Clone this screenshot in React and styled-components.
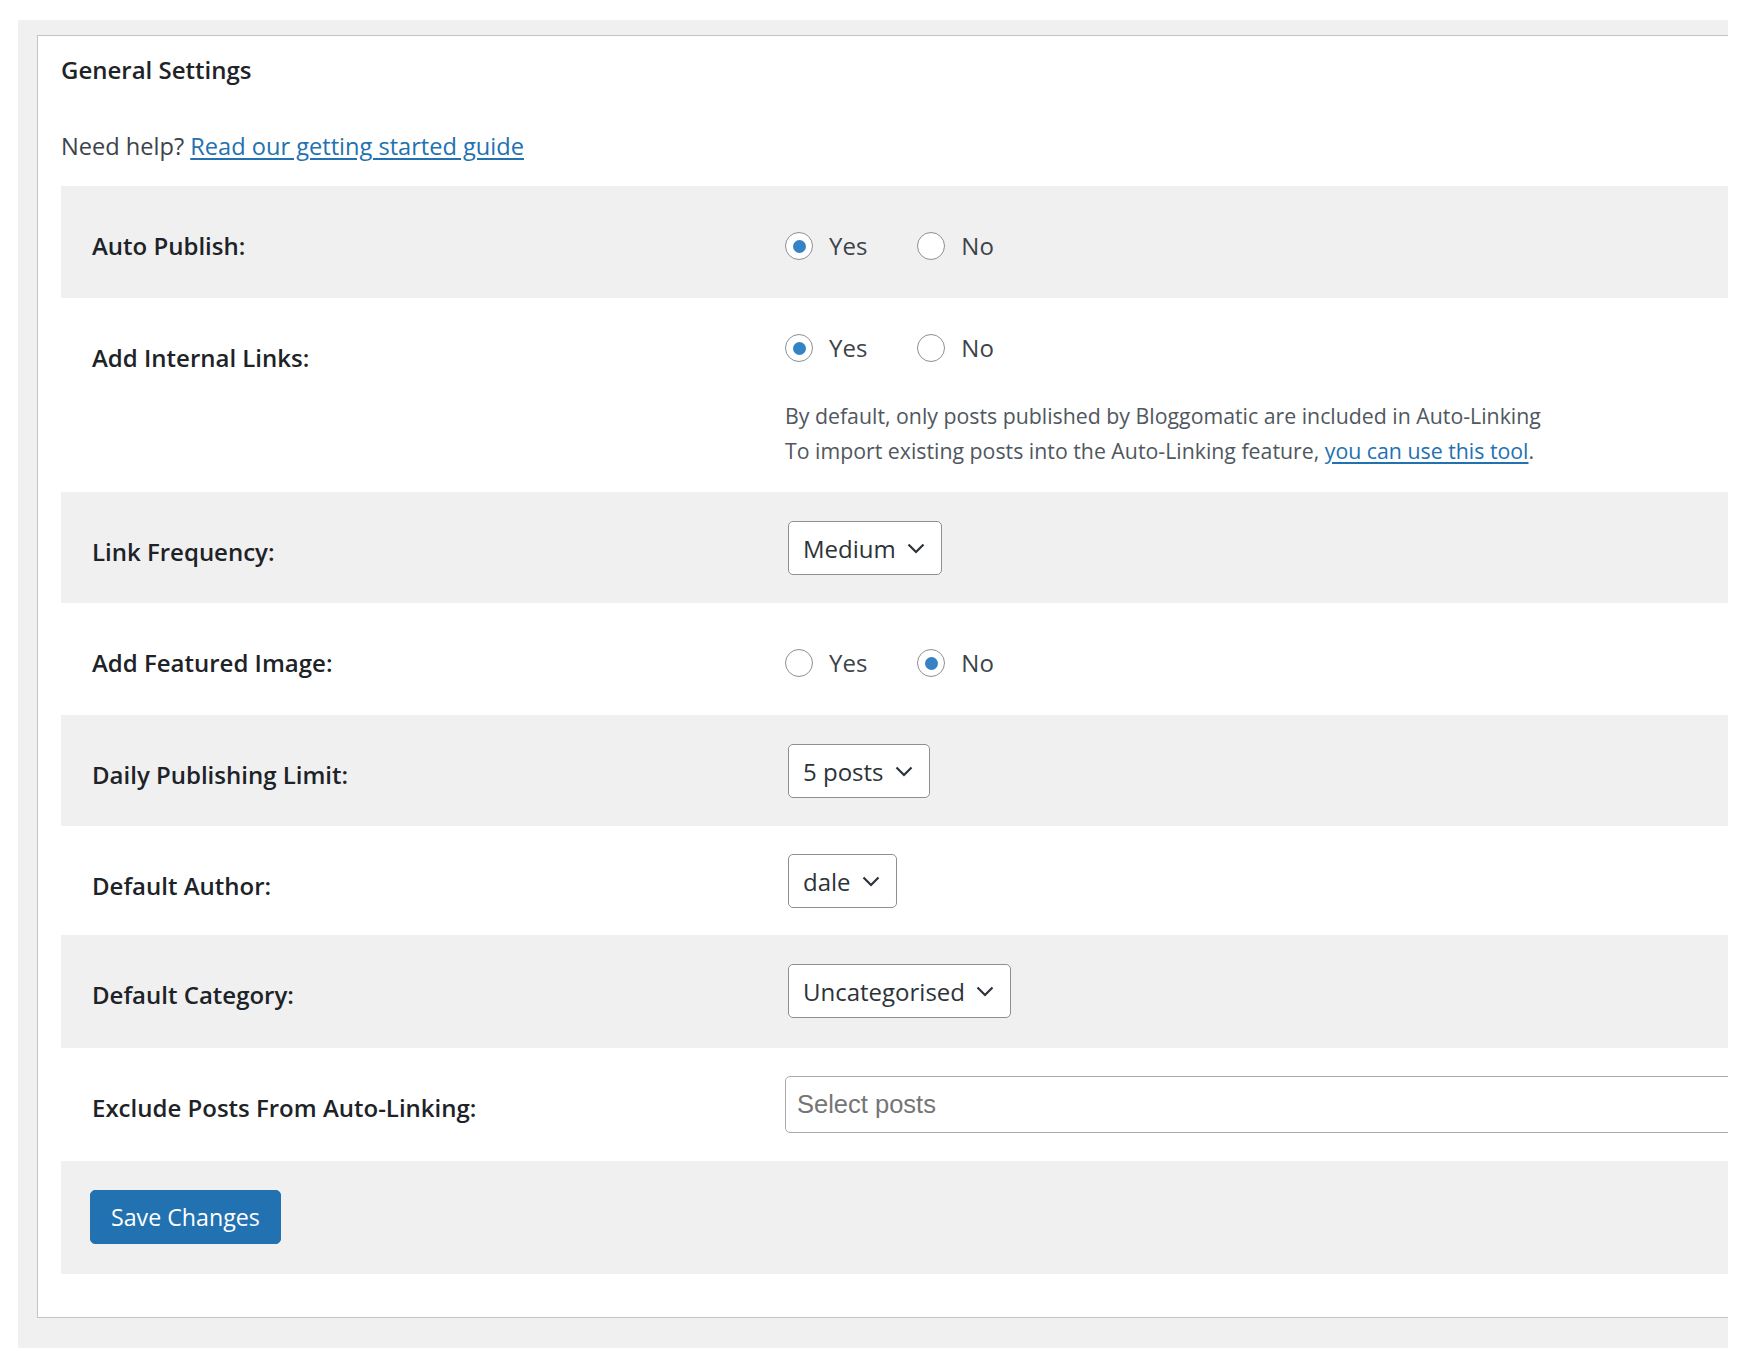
import React from 'react';
import styled, { createGlobalStyle } from 'styled-components';

const GlobalStyle = createGlobalStyle`
  body {
    margin: 0;
    background: #fff;
    font-family: "Open Sans", "Noto Sans", sans-serif;
  }
`;

const Frame = styled.div`
  margin: 20px 0 0 18px;
  width: 1710px;
  height: 1328px;
  box-sizing: border-box;
  padding: 15px 0 0 19px;
  background: #f0f0f1;
  overflow: hidden;
`;

const Panel = styled.div`
  width: 1800px;
  height: 1283px;
  box-sizing: border-box;
  padding: 18px 0 0 23px;
  background: #fff;
  border: 1px solid #c3c4c7;
`;

const Title = styled.h2`
  margin: 0;
  font-size: 24px;
  line-height: 32px;
  font-weight: 600;
  color: #1d2327;
`;

const Help = styled.p`
  margin: 44px 0 24px;
  font-size: 23.6px;
  line-height: 32px;
  color: #3c434a;
`;

const Link = styled.a`
  color: #2271b1;
  text-decoration: underline;
  text-underline-offset: 3px;
`;

const Table = styled.div`
  display: flex;
  flex-direction: column;
`;

const Row = styled.div`
  display: grid;
  grid-template-columns: 724px 1fr;
  align-items: start;
  min-height: ${p => p.$h || 112}px;
  background: ${p => (p.$shade ? '#f0f0f1' : '#fff')};
`;

const Label = styled.div`
  padding: 44px 0 0 31px;
  font-size: 24px;
  line-height: 32px;
  font-weight: 600;
  color: #1d2327;
`;

const Cell = styled.div`
  padding-top: ${p => p.$top}px;
  padding-bottom: ${p => p.$bottom || 0}px;
`;

const RadioGroup = styled.div`
  display: flex;
  align-items: center;
  gap: 50px;
`;

const Option = styled.label`
  display: flex;
  align-items: center;
  gap: 16px;
  font-size: 24px;
  line-height: 32px;
  color: #3c434a;
`;

const Circle = styled.span`
  width: 28px;
  height: 28px;
  box-sizing: border-box;
  border: 1.5px solid #8c8f94;
  border-radius: 50%;
  background: #fff;
  display: flex;
  align-items: center;
  justify-content: center;

  &::after {
    content: '';
    width: 13px;
    height: 13px;
    border-radius: 50%;
    background: ${p => (p.$on ? '#3582c4' : 'transparent')};
  }
`;

const Description = styled.p`
  margin: ${p => p.$gap || 0}px 0 0;
  font-size: 21.3px;
  line-height: 35px;
  color: #50575e;
`;

const Select = styled.div`
  display: inline-flex;
  align-items: center;
  gap: 11px;
  height: 54px;
  box-sizing: border-box;
  margin-left: 3px;
  padding: 0 16px 0 14px;
  border: 1px solid #8c8f94;
  border-radius: 5px;
  background: #fff;
  font-size: 24px;
  color: #2c3338;
`;

const Multi = styled.div`
  height: 57px;
  box-sizing: border-box;
  width: 1200px;
  display: flex;
  align-items: center;
  padding-left: 11px;
  border: 1px solid #aaa;
  border-radius: 5px;
  background: #fff;
  font-family: "Liberation Sans", Arial, sans-serif;
  font-size: 25.5px;
  color: #757575;
`;

const Footer = styled.div`
  min-height: 113px;
  box-sizing: border-box;
  padding: 29px 0 0 29px;
  background: #f0f0f1;
`;

const Button = styled.button`
  height: 54px;
  padding: 0 20px;
  border: 1px solid #2271b1;
  border-radius: 5px;
  background: #2271b1;
  color: #fff;
  font-family: inherit;
  font-size: 23.2px;
`;

const Chevron = () => (
  <svg width="18" height="11" viewBox="0 0 18 11" fill="none">
    <polyline points="1.5,1.5 9,9 16.5,1.5" stroke="#2c3338" strokeWidth="2.2" />
  </svg>
);

const Radios = ({ value }) => (
  <RadioGroup>
    <Option><Circle $on={value === 'yes'} />Yes</Option>
    <Option><Circle $on={value === 'no'} />No</Option>
  </RadioGroup>
);

const Dropdown = ({ children }) => (
  <Select>
    {children}
    <Chevron />
  </Select>
);

export default function App() {
  return (
    <>
      <GlobalStyle />
      <Frame>
        <Panel>
          <Title>General Settings</Title>
          <Help>
            Need help? <Link href="#">Read our getting started guide</Link>
          </Help>
          <Table>
            <Row $shade>
              <Label>Auto Publish:</Label>
              <Cell $top={44}><Radios value="yes" /></Cell>
            </Row>
            <Row>
              <Label>Add Internal Links:</Label>
              <Cell $top={34} $bottom={24}>
                <Radios value="yes" />
                <Description $gap={34}>
                  By default, only posts published by Bloggomatic are included in Auto-Linking
                </Description>
                <Description>
                  To import existing posts into the Auto-Linking feature,{' '}
                  <Link href="#">you can use this tool</Link>.
                </Description>
              </Cell>
            </Row>
            <Row $shade $h={111}>
              <Label>Link Frequency:</Label>
              <Cell $top={29}><Dropdown>Medium</Dropdown></Cell>
            </Row>
            <Row>
              <Label>Add Featured Image:</Label>
              <Cell $top={44}><Radios value="no" /></Cell>
            </Row>
            <Row $shade $h={111}>
              <Label>Daily Publishing Limit:</Label>
              <Cell $top={29}><Dropdown>5 posts</Dropdown></Cell>
            </Row>
            <Row $h={109}>
              <Label>Default Author:</Label>
              <Cell $top={28}><Dropdown>dale</Dropdown></Cell>
            </Row>
            <Row $shade $h={113}>
              <Label>Default Category:</Label>
              <Cell $top={29}><Dropdown>Uncategorised</Dropdown></Cell>
            </Row>
            <Row $h={113}>
              <Label>Exclude Posts From Auto-Linking:</Label>
              <Cell $top={28}><Multi>Select posts</Multi></Cell>
            </Row>
            <Footer>
              <Button>Save Changes</Button>
            </Footer>
          </Table>
        </Panel>
      </Frame>
    </>
  );
}
